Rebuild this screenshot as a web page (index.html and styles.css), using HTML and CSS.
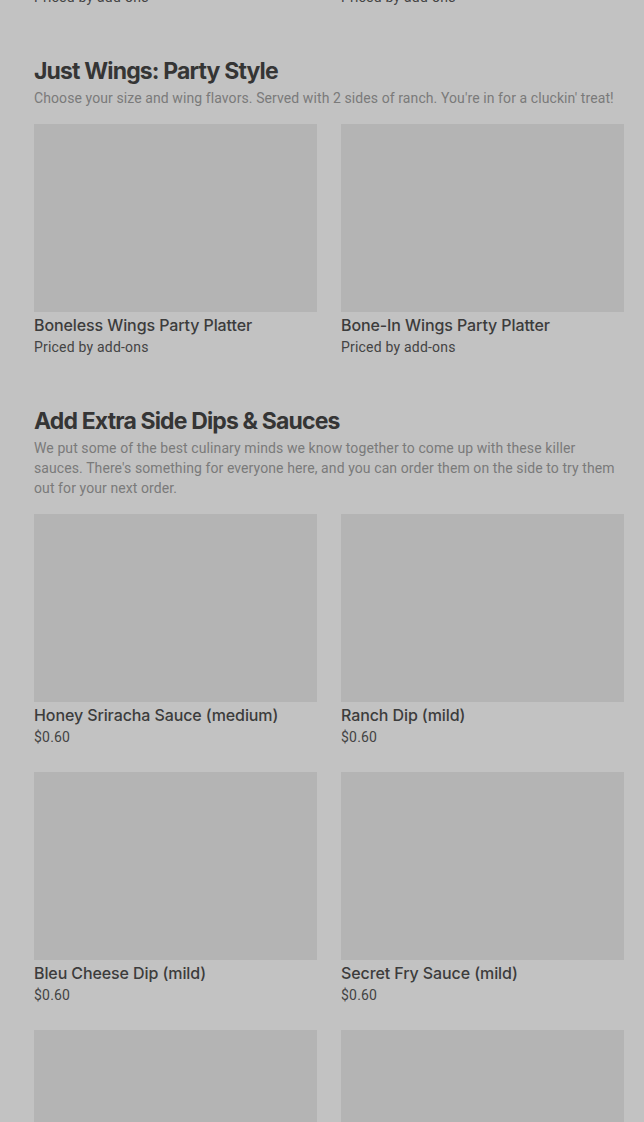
FILE: index.html
```html
<!DOCTYPE html>
<html lang="en">
<head>
<meta charset="utf-8">
<title>Menu</title>
<link rel="stylesheet" href="styles.css">
</head>
<body>
<main class="menu">
  <div class="tail">
    <div class="grid">
      <p class="price">Priced by add-ons</p>
      <p class="price">Priced by add-ons</p>
    </div>
  </div>

  <section class="section">
    <h2 class="section-title">Just Wings: Party Style</h2>
    <p class="section-desc">Choose your size and wing flavors. Served with 2 sides of ranch. You're in for a cluckin' treat!</p>
    <div class="grid">
      <div class="item">
        <div class="thumb"></div>
        <h3 class="item-name">Boneless Wings Party Platter</h3>
        <p class="price">Priced by add-ons</p>
      </div>
      <div class="item">
        <div class="thumb"></div>
        <h3 class="item-name">Bone-In Wings Party Platter</h3>
        <p class="price">Priced by add-ons</p>
      </div>
    </div>
  </section>

  <section class="section">
    <h2 class="section-title">Add Extra Side Dips &amp; Sauces</h2>
    <p class="section-desc">We put some of the best culinary minds we know together to come up with these killer sauces. There's something for everyone here, and you can order them on the side to try them out for your next order.</p>
    <div class="grid">
      <div class="item">
        <div class="thumb"></div>
        <h3 class="item-name">Honey Sriracha Sauce (medium)</h3>
        <p class="price">$0.60</p>
      </div>
      <div class="item">
        <div class="thumb"></div>
        <h3 class="item-name">Ranch Dip (mild)</h3>
        <p class="price">$0.60</p>
      </div>
      <div class="item">
        <div class="thumb"></div>
        <h3 class="item-name">Bleu Cheese Dip (mild)</h3>
        <p class="price">$0.60</p>
      </div>
      <div class="item">
        <div class="thumb"></div>
        <h3 class="item-name">Secret Fry Sauce (mild)</h3>
        <p class="price">$0.60</p>
      </div>
      <div class="item">
        <div class="thumb"></div>
        <h3 class="item-name">Garlic Parmesan Sauce (mild)</h3>
        <p class="price">$0.60</p>
      </div>
      <div class="item">
        <div class="thumb"></div>
        <h3 class="item-name">Buffalo Sauce (hot)</h3>
        <p class="price">$0.60</p>
      </div>
    </div>
  </section>
</main>
</body>
</html>
```

FILE: styles.css
```css
html, body {
  margin: 0;
  padding: 0;
  background: #c2c2c2;
  overflow: hidden;
}

body {
  font-family: Roboto, "Noto Sans", sans-serif;
  color: #333;
}

.menu {
  padding: 0 20px 0 34px;
}

.tail {
  margin-top: -13px;
}

.grid {
  display: grid;
  grid-template-columns: 1fr 1fr;
  column-gap: 24px;
  row-gap: 25px;
}

.section {
  margin-top: 48px;
}

.section-title {
  margin: 0;
  font-family: Inter, "Noto Sans", sans-serif;
  font-size: 23px;
  line-height: 32px;
  font-weight: 700;
  letter-spacing: -0.85px;
  color: #353535;
}

.section-desc {
  margin: 1px 0 16px;
  font-size: 14px;
  line-height: 20px;
  letter-spacing: 0.09px;
  color: #7a7a7a;
}

.item {
  display: flex;
  flex-direction: column;
}

.thumb {
  height: 188px;
  background: #b4b4b4;
}

.item-name {
  margin: 1px 0 0;
  font-family: Inter, "Noto Sans", sans-serif;
  font-size: 16px;
  line-height: 24px;
  font-weight: 500;
  letter-spacing: -0.1px;
  color: #3c3c3c;
}

.price {
  margin: 0;
  font-size: 14px;
  line-height: 20px;
  letter-spacing: 0.2px;
  color: #444;
}
```
